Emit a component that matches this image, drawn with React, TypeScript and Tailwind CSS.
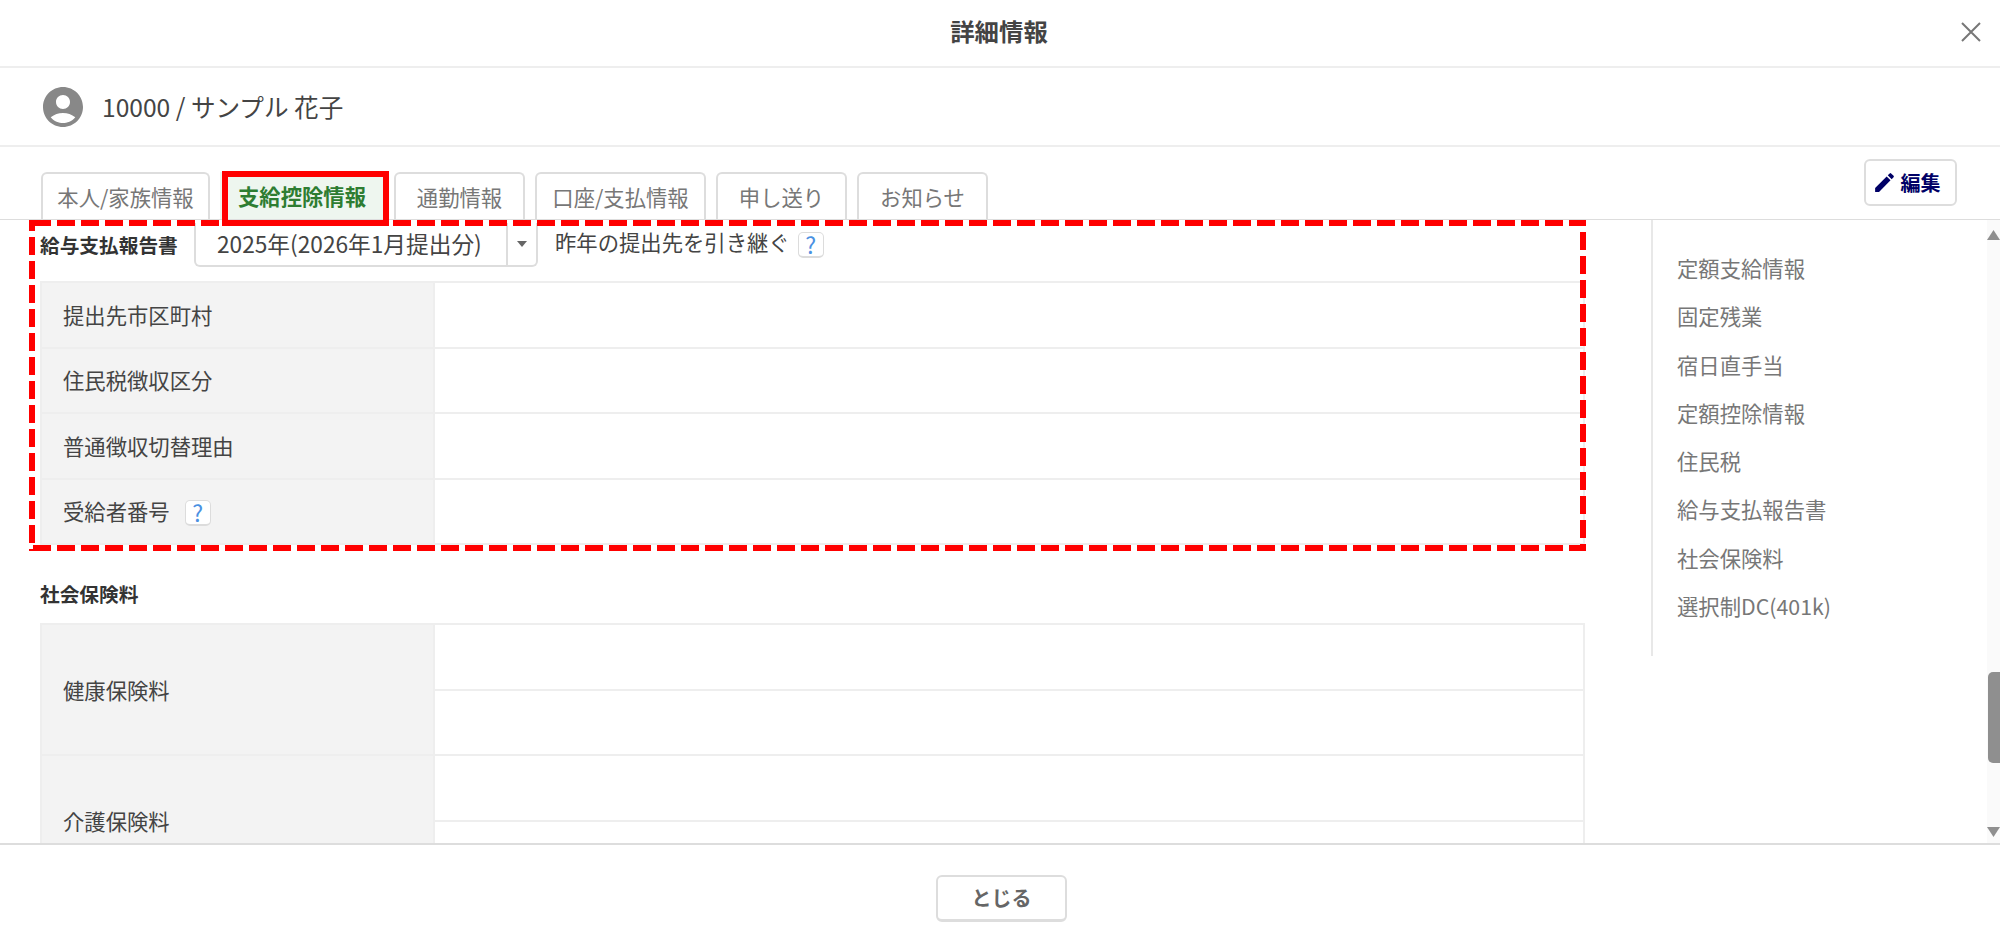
import { MdAccountCircle, MdEdit } from "react-icons/md";

const font = "font-['Noto_Sans_CJK_JP','Noto_Sans',sans-serif]";

const tabs = [
  { name: "本人/家族情報", width: "w-[169px]" },
  { name: "支給控除情報", width: "w-[164px]", active: true },
  { name: "通勤情報", width: "w-[131px]" },
  { name: "口座/支払情報", width: "w-[171px]" },
  { name: "申し送り", width: "w-[131px]" },
  { name: "お知らせ", width: "w-[131px]" },
];

const navItems = [
  "定額支給情報",
  "固定残業",
  "宿日直手当",
  "定額控除情報",
  "住民税",
  "給与支払報告書",
  "社会保険料",
  "選択制DC(401k)",
];

const Help = () => (
  <span className="flex h-[26px] w-[26px] items-center justify-center rounded-[5px] border border-b-2 border-[#dcdcdc] bg-white text-[23px] leading-none text-[#4a90e2]">
    ?
  </span>
);

const Row = ({ label, help }: { label: string; help?: boolean }) => (
  <div className="flex h-[65.5px] border-b-2 border-[#eeeeee]">
    <div className="flex w-[393px] items-center gap-[15px] border-r-2 border-[#eeeeee] bg-[#f3f3f3] pl-[21px] text-[21.33px] text-[#444]">
      {label}
      {help && (
        <span className="mt-[4px]">
          <Help />
        </span>
      )}
    </div>
    <div className="flex-1" />
  </div>
);

const DoubleRow = ({ label }: { label: string }) => (
  <div className="flex h-[131px] border-b-2 border-[#eeeeee]">
    <div className="flex w-[393px] items-center border-r-2 border-[#eeeeee] bg-[#f3f3f3] pl-[21px] text-[21.33px] text-[#444]">
      {label}
    </div>
    <div className="flex flex-1 flex-col">
      <div className="h-[65.5px] border-b-2 border-[#eeeeee]" />
    </div>
  </div>
);

export default function App() {
  return (
    <div className={`flex h-[949px] w-[2000px] flex-col overflow-hidden bg-white ${font}`}>
      <header className="grid h-[68px] shrink-0 grid-cols-[1fr_auto_1fr] items-center border-b-2 border-[#eeeeee] pb-[3px]">
        <div />
        <h1 className="-translate-x-[1px] text-[24.4px] font-bold text-[#444]">詳細情報</h1>
        <div className="flex justify-end pr-[19px]">
          <svg width="20" height="20" viewBox="0 0 20 20" className="text-[#777]">
            <path d="M1 1L19 19M19 1L1 19" stroke="currentColor" strokeWidth="2" fill="none" />
          </svg>
        </div>
      </header>

      <div className="flex h-[79px] shrink-0 items-center gap-[15px] border-b-2 border-[#eeeeee] pl-[39px]">
        <MdAccountCircle size={48} className="text-[#888888]" />
        <span className="text-[24.6px] text-[#444]">10000 / サンプル 花子</span>
      </div>

      <div className="flex h-[73px] shrink-0 items-end justify-between border-b border-[#dddddd] pl-[41px] pr-[43px]">
        <div className="flex gap-[10px]">
          {tabs.map((tab) =>
            tab.active ? (
              <div
                key={tab.name}
                className={`relative flex h-[47px] ${tab.width} items-center justify-center bg-[#eef6ef] text-[21.33px] font-bold text-[#2e7d32]`}
              >
                {tab.name}
                <div className="absolute -bottom-[7px] -right-[5px] -top-[1px] left-[2px] border-[6px] border-[#ff0000]" />
              </div>
            ) : (
              <div
                key={tab.name}
                className={`flex h-[47px] ${tab.width} items-center justify-center rounded-t-[6px] border-2 border-b-0 border-[#dddddd] bg-white text-[21.33px] text-[#777]`}
              >
                {tab.name}
              </div>
            ),
          )}
        </div>
        <button className="mb-[13px] flex h-[47px] w-[93px] items-center justify-center gap-[4px] rounded-[6px] border-2 border-[#dddddd] bg-white pr-[9px] text-[20px] font-bold text-[#000066]">
          <MdEdit size={25} />
          編集
        </button>
      </div>

      <main className="relative flex min-h-0 flex-1">
        <div className="w-[1651px] shrink-0 overflow-hidden pl-[40px] pr-[66px]">
          <div className="flex h-[61px] items-start pt-[3px]">
            <span className="mt-[7px] w-[154px] text-[19.7px] font-bold text-[#333]">給与支払報告書</span>
            <div className="flex h-[44px] w-[344px] items-stretch rounded-b-[6px] border-2 border-t-0 border-[#dddddd] text-[22.7px] text-[#444]">
              <span className="flex w-[310px] items-center pl-[21px]">2025年(2026年1月提出分)</span>
              <span className="flex flex-1 items-center justify-center border-l-2 border-[#dddddd]">
                <svg width="10" height="6" viewBox="0 0 10 6">
                  <path d="M0 0H10L5 6Z" fill="#666" />
                </svg>
              </span>
            </div>
            <span className="ml-[17px] mt-[3px] text-[21.33px] text-[#444]">昨年の提出先を引き継ぐ</span>
            <span className="ml-[8px] mt-[9px]">
              <Help />
            </span>
          </div>

          <div className="border-x-2 border-t-2 border-[#eeeeee]">
            <Row label="提出先市区町村" />
            <Row label="住民税徴収区分" />
            <Row label="普通徴収切替理由" />
            <Row label="受給者番号" help />
          </div>

          <h2 className="mb-[15px] mt-[35px] text-[19.7px] font-bold leading-[28px] text-[#333]">社会保険料</h2>

          <div className="border-x-2 border-t-2 border-[#eeeeee]">
            <DoubleRow label="健康保険料" />
            <DoubleRow label="介護保険料" />
          </div>
        </div>

        <nav className="h-[436px] w-[336px] shrink-0 border-l-2 border-[#e8e8e8] pl-[24px] pt-[24px] text-[21.33px] leading-[48.3px] text-[#777]">
          {navItems.map((item) => (
            <div key={item}>{item}</div>
          ))}
        </nav>

        <div className="relative flex w-[13px] shrink-0 flex-col justify-between bg-[#fafafa] pb-[6px] pt-[10px]">
          <svg width="13" height="10" viewBox="0 0 13 10">
            <path d="M6.5 0L13 10H0Z" fill="#8f8f8f" />
          </svg>
          <div className="absolute right-0 top-[452px] h-[91px] w-[12px] rounded-l-[5px] bg-[#8f8f8f]" />
          <svg width="13" height="10" viewBox="0 0 13 10">
            <path d="M0 0H13L6.5 10Z" fill="#8f8f8f" />
          </svg>
        </div>

        {/* annotation frame drawn over the form */}
        <svg className="pointer-events-none absolute left-[29px] top-0" width="1557" height="331">
          <g stroke="#ff0000" strokeWidth="6" strokeDasharray="18 6" fill="none">
            <path d="M0 3H1557" strokeDashoffset="20" />
            <path d="M0 328H1557" strokeDashoffset="20" />
            <path d="M3 0V331" strokeDashoffset="7" />
            <path d="M1554 0V331" strokeDashoffset="12" />
          </g>
        </svg>
      </main>

      <footer className="flex h-[106px] shrink-0 items-center justify-center border-t-2 border-[#dddddd] pl-[3px] pt-[3px]">
        <button className="h-[47px] w-[131px] rounded-[6px] border-2 border-b-[3px] border-[#dddddd] bg-white text-[20px] font-bold text-[#666]">
          とじる
        </button>
      </footer>
    </div>
  );
}
